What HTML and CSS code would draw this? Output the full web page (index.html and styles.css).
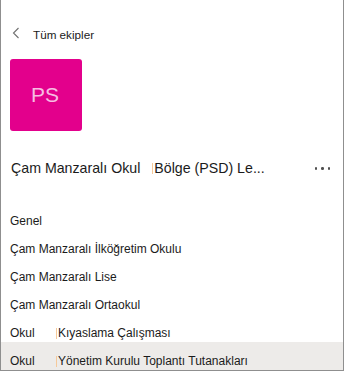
FILE: index.html
```html
<!DOCTYPE html>
<html lang="tr">
  <head>
    <meta charset="UTF-8" />
    <meta name="viewport" content="width=device-width, initial-scale=1.0" />
    <title>Tüm ekipler</title>
    <link rel="stylesheet" href="styles.css">
  </head>
  <body>
    <div class="panel">
      <div class="back">
        <svg class="chevron" width="8" height="12" viewBox="0 0 8 12">
          <path d="M6.5 1 L1.5 6 L6.5 11" fill="none" stroke="#707070" stroke-width="1.1" />
        </svg>
        <span>Tüm ekipler</span>
      </div>

      <div class="avatar">PS</div>

      <div class="team">
        <span class="team-name">Çam Manzaralı Okul</span>
        <span class="mark"></span>
        <span class="team-extra">Bölge (PSD) Le...</span>
        <button class="more" title="Diğer seçenekler">
          <span></span><span></span><span></span>
        </button>
      </div>

      <ul class="channels">
        <li>Genel</li>
        <li>Çam Manzaralı İlköğretim Okulu</li>
        <li>Çam Manzaralı Lise</li>
        <li>Çam Manzaralı Ortaokul</li>
        <li><span class="prefix">Okul</span><span class="mark"></span>Kıyaslama Çalışması</li>
        <li class="active"><span class="prefix">Okul</span><span class="mark"></span>Yönetim Kurulu Toplantı Tutanakları</li>
      </ul>
    </div>
  </body>
</html>
```

FILE: styles.css
```css
* {
  box-sizing: border-box;
}

body {
  margin: 0;
  font-family: "Liberation Sans", Arial, sans-serif;
  color: #1b1b1b;
  background: #ffffff;
}

.panel {
  width: 344px;
  height: 371px;
  border: 1px solid #8f8f8f;
  border-top: none;
  overflow: hidden;
}

.back {
  display: flex;
  align-items: center;
  height: 16px;
  margin-top: 26px;
  padding-left: 11px;
  font-size: 11.7px;
}

.back .chevron {
  margin-right: 13px;
  margin-top: -3px;
}

.avatar {
  width: 72px;
  height: 72px;
  margin: 17px 0 0 9px;
  border-radius: 3px;
  background: #e3008c;
  color: #f6bde2;
  font-size: 21px;
  display: flex;
  align-items: center;
  justify-content: center;
  padding-right: 2px;
}

.team {
  display: flex;
  align-items: center;
  height: 24px;
  margin-top: 25px;
  padding-left: 10px;
  font-size: 14.2px;
}

.mark {
  display: inline-block;
  width: 1px;
  height: 11px;
  background: #f6c99a;
}

.team .mark {
  margin-left: 12px;
  margin-right: 1px;
}

.team-extra {
  flex: 1;
}

.more {
  display: flex;
  gap: 4px;
  border: none;
  background: none;
  padding: 0;
  margin-right: 13px;
  margin-top: 1px;
  cursor: pointer;
}

.more span {
  width: 2.5px;
  height: 2.5px;
  border-radius: 50%;
  background: #505050;
}

.channels {
  list-style: none;
  margin: 22px 0 0;
  padding: 0;
  font-size: 12px;
}

.channels li {
  display: flex;
  align-items: center;
  height: 28px;
  padding: 11px 0 1px 9px;
  line-height: 16px;
}

.channels .prefix {
  width: 46px;
}

.channels .mark {
  margin-right: 1px;
}

.channels li.active {
  background: #edebe9;
}
```
